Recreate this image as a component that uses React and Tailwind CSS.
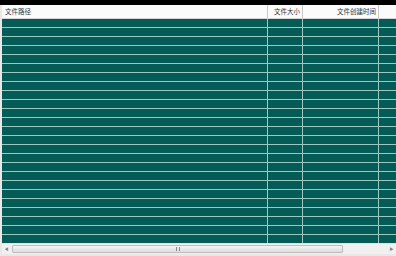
const rows = Array.from({ length: 25 }, (_, i) => i);

export default function App() {
  return (
    <div
      className="w-[396px] h-[256px] overflow-hidden bg-[#f0f0f0] flex flex-col"
      style={{ fontFamily: '"Noto Sans CJK SC", "Liberation Sans", sans-serif' }}
    >
      <div className="h-[5px] bg-black shrink-0" />
      <div className="flex-1 flex flex-col pl-[2px] bg-[#e8e8e8]">
        {/* header */}
        <div className="h-[14px] shrink-0 flex bg-[#fbfbfb] border-b border-[#d5d5d5] text-[6.5px] leading-[13px] text-[#333]">
          <div className="w-[266px] border-r border-[#c8c8c8] pl-[3px]">文件路径</div>
          <div className="w-[35px] border-r border-[#c8c8c8] text-right pr-[2px]">文件大小</div>
          <div className="w-[76px] border-r border-[#c8c8c8] text-right pr-[2px]">文件创建时间</div>
          <div className="flex-1" />
        </div>
        {/* body */}
        <div className="h-[224px] shrink-0 overflow-hidden bg-[#055c57]">
          {rows.map((r) => (
            <div key={r} className="h-[9px] flex border-b border-[#9ccac3]">
              <div className="w-[266px] border-r border-[#9ccac3]" />
              <div className="w-[35px] border-r border-[#9ccac3]" />
              <div className="w-[76px] border-r border-[#9ccac3]" />
              <div className="flex-1" />
            </div>
          ))}
        </div>
        {/* horizontal scrollbar */}
        <div className="h-[11px] shrink-0 flex items-center bg-[#f0f0f0] border-t border-[#e0e0e0]">
          <div className="w-[9px] flex justify-center text-[4px] text-[#808080]">◀</div>
          <div className="w-[331px] h-[8px] ml-[1px] rounded-[1px] border border-[#bdbdbd] bg-gradient-to-b from-[#f4f4f4] to-[#dcdcdc] flex justify-center items-center">
            <div className="w-[4px] h-[4px] border-x border-[#888]" />
          </div>
          <div className="flex-1" />
          <div className="w-[9px] flex justify-center text-[4px] text-[#808080]">▶</div>
        </div>
      </div>
    </div>
  );
}
